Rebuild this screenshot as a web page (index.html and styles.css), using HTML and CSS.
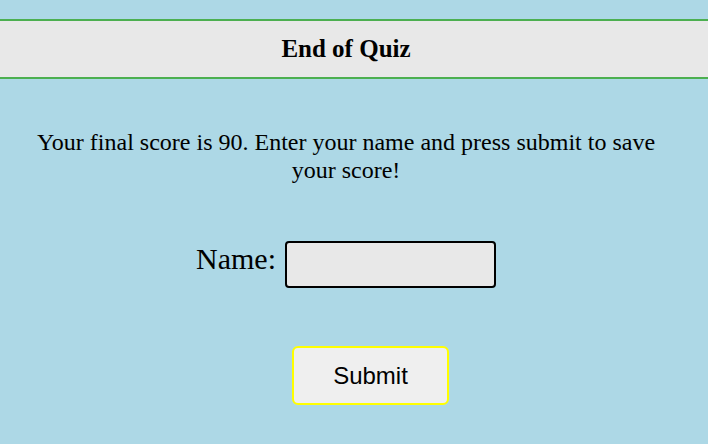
FILE: index.html
```html
<!DOCTYPE html>
<html lang="en">
<head>
<meta charset="utf-8">
<title>End of Quiz</title>
<link rel="stylesheet" href="styles.css">
</head>
<body>
<header class="banner"><h1 class="banner-title">End of Quiz</h1></header>
<main class="content">
  <p class="message">Your final score is 90. Enter your name and press submit to save your score!</p>
  <form class="name-form">
    <div class="name-row">
      <label class="name-label" for="name">Name:</label>
      <input class="name-input" id="name" type="text">
    </div>
    <button class="submit-btn" type="button">Submit</button>
  </form>
</main>
</body>
</html>
```

FILE: styles.css
```css
html, body {
  margin: 0;
  padding: 0;
}
body {
  background: #add8e6;
  font-family: "Liberation Serif", "Times New Roman", serif;
  color: #000;
}
.banner {
  margin-top: 19px;
  height: 56px;
  background: #e8e8e8;
  border-top: 2px solid #4caf50;
  border-bottom: 2px solid #4caf50;
  display: flex;
  align-items: center;
  justify-content: center;
  padding-right: 16px;
}
.banner-title {
  margin: 0;
  font-size: 25px;
  font-weight: bold;
}
.content {
  width: 630px;
  margin-left: 31px;
  display: flex;
  flex-direction: column;
  align-items: center;
}
.message {
  margin: 49px 0 0;
  font-size: 24px;
  line-height: 28px;
  text-align: center;
}
.name-form {
  display: flex;
  flex-direction: column;
  align-items: center;
  margin-top: 57px;
}
.name-row {
  display: flex;
  align-items: flex-start;
  gap: 9px;
}
.name-label {
  font-size: 30px;
  line-height: 1.15;
  margin-top: 1px;
}
.name-input {
  box-sizing: border-box;
  width: 211px;
  height: 47px;
  margin: 0;
  border: 2px solid #000;
  border-radius: 4px;
  background: #e8e8e8;
  font-size: 16px;
}
.submit-btn {
  box-sizing: border-box;
  margin: 58px 0 0 49px;
  width: 157px;
  height: 59px;
  background: #efefef;
  border: 2px solid #ffff00;
  border-radius: 6px;
  font-family: "Liberation Sans", Arial, sans-serif;
  font-size: 24px;
  color: #000;
}
```
